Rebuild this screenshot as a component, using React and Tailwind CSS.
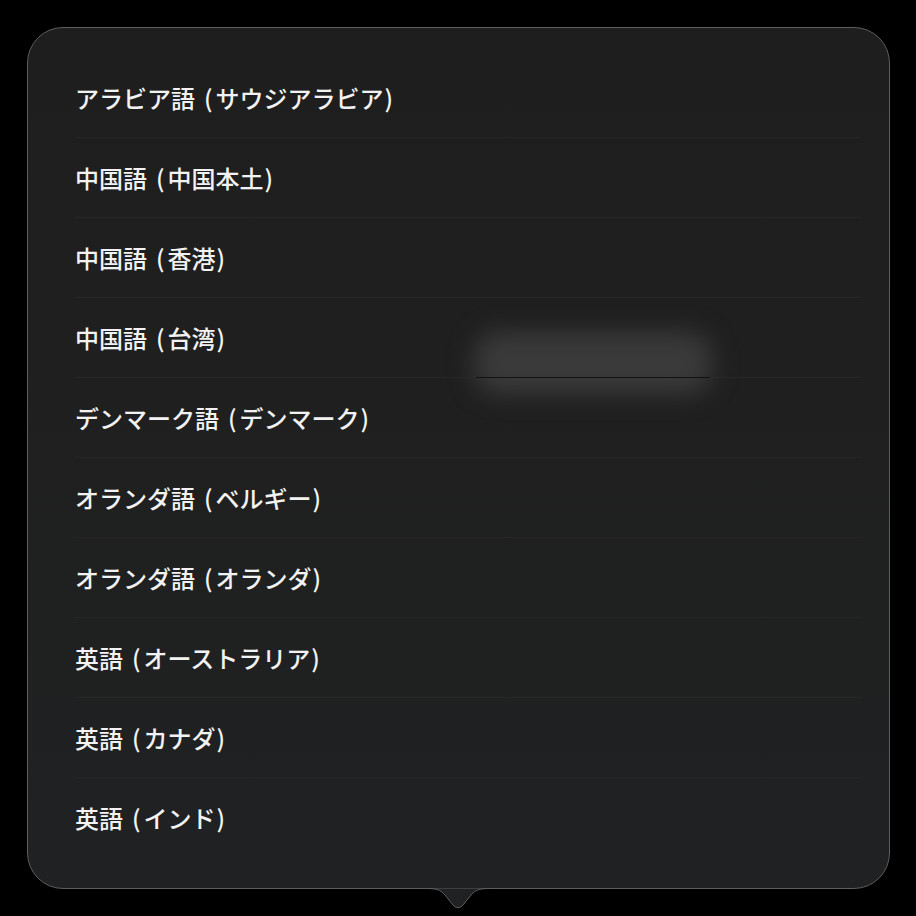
import React from 'react'

const regions = [
  ['アラビア語', 'サウジアラビア'],
  ['中国語', '中国本土'],
  ['中国語', '香港'],
  ['中国語', '台湾'],
  ['デンマーク語', 'デンマーク'],
  ['オランダ語', 'ベルギー'],
  ['オランダ語', 'オランダ'],
  ['英語', 'オーストラリア'],
  ['英語', 'カナダ'],
  ['英語', 'インド']
]

const Row = ({ lang, region }) => (
  <li className="flex h-[80px] items-center border-b border-[#262626] last:border-b-0">
    <span className="text-[24px] font-medium leading-none text-[#f2f2f2]">
      {lang}
      <span className="ml-[9px]">(</span>
      <span className="ml-[3px]">{region}</span>
      <span className="ml-[1px]">)</span>
    </span>
  </li>
)

export default function App() {
  return (
    <div
      className="h-[916px] w-[916px] bg-black pl-[27px] pt-[27px]"
      style={{ fontFamily: '"Noto Sans CJK JP", "Noto Sans", sans-serif' }}
    >
      <div className="relative h-[862px] w-[863px] rounded-[36px] border border-[#5e5e5e] bg-gradient-to-b from-[#1e1e1e] to-[#202122] pl-[47px] pr-[28px] pt-[30px]">
        <ul className="flex flex-col">
          {regions.map(([lang, region]) => (
            <Row key={lang + region} lang={lang} region={region} />
          ))}
        </ul>

        {/* blurred highlight over the list */}
        <div className="pointer-events-none absolute left-[446px] top-[304px] h-[62px] w-[238px] rounded-[24px] bg-[#3a3a3a] blur-[12px]" />
        <div className="pointer-events-none absolute left-[448px] top-[349px] h-px w-[234px] bg-[#121212] blur-[0.5px]" />

        {/* pointer arrow */}
        <svg
          className="absolute left-[398px] top-[860px]"
          width="64"
          height="24"
          viewBox="0 0 64 24"
        >
          <path
            d="M0 0.5 C10 0.5 14 1.5 19 7 L27 17 C29.5 20.5 34.5 20.5 37 17 L45 7 C50 1.5 54 0.5 64 0.5"
            fill="#202122"
            stroke="#5e5e5e"
            strokeWidth="1"
          />
        </svg>
      </div>
    </div>
  )
}
